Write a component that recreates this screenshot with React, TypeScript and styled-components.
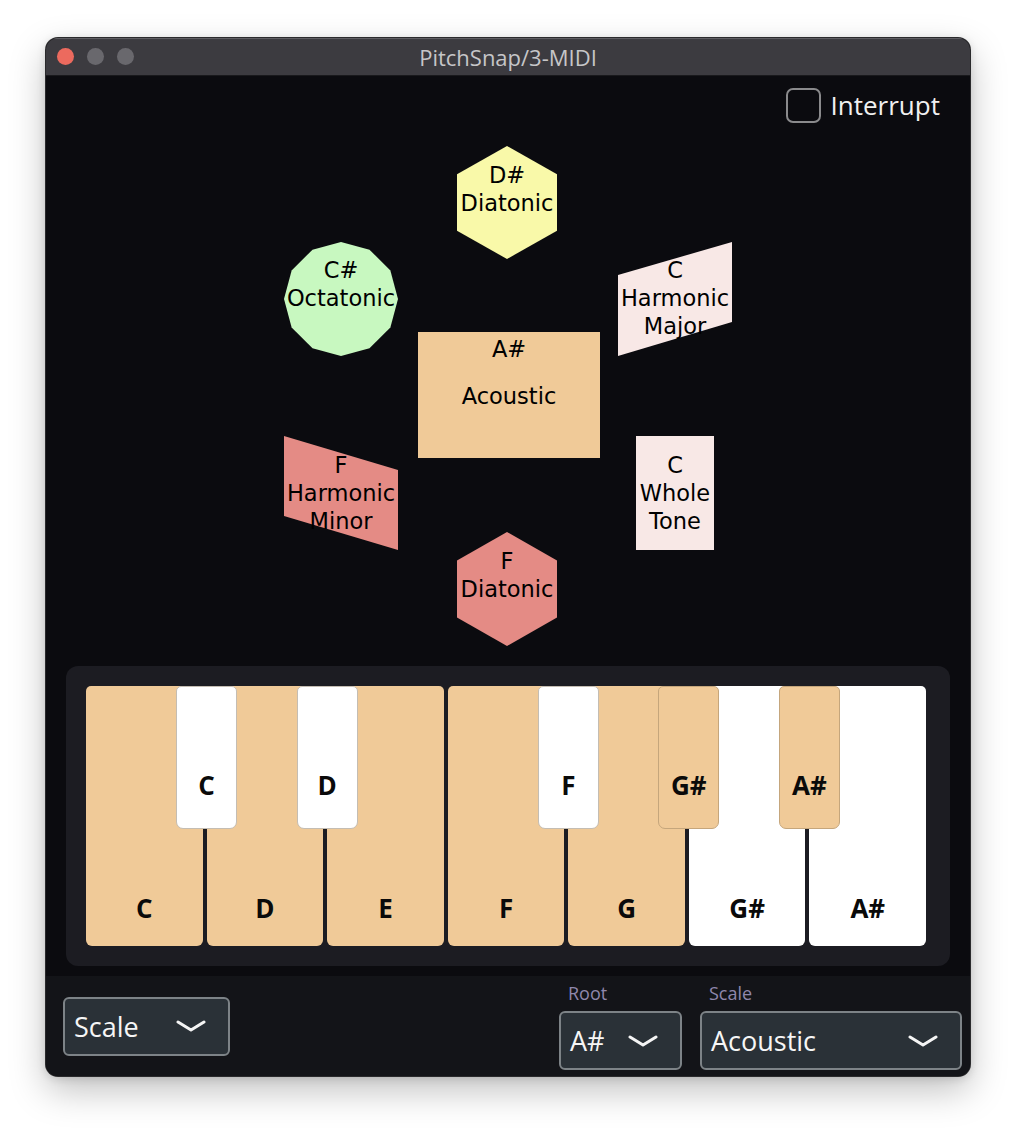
import React from 'react';
import styled, { createGlobalStyle } from 'styled-components';

const GlobalStyle = createGlobalStyle`
  html, body {
    margin: 0;
    padding: 0;
    background: #ffffff;
  }
  * {
    box-sizing: border-box;
  }
`;

const Page = styled.div`
  padding: 38px 0 0 46px;
  height: 1130px;
`;

const Window = styled.div`
  width: 924px;
  height: 1038px;
  border-radius: 12px;
  overflow: hidden;
  display: flex;
  flex-direction: column;
  background: #0b0b0f;
  box-shadow: 0 0 0 1px #2a2a2c, 0 14px 36px rgba(0, 0, 0, 0.25), 0 2px 10px rgba(0, 0, 0, 0.15);
`;

const TitleBar = styled.div`
  height: 38px;
  flex-shrink: 0;
  display: grid;
  grid-template-columns: 1fr auto 1fr;
  align-items: center;
  background: #3c3b40;
  border-bottom: 1px solid #19191c;
  box-shadow: inset 0 1px 0 #5e5d62;
`;

const Lights = styled.div`
  display: flex;
  gap: 13px;
  padding-left: 11px;
`;

const Light = styled.span<{ $color: string }>`
  width: 17px;
  height: 17px;
  border-radius: 50%;
  background: ${(p) => p.$color};
`;

const Title = styled.div`
  font-family: 'Open Sans', sans-serif;
  font-size: 22px;
  color: #c6c6c8;
`;

const Content = styled.div`
  flex: 1;
  display: flex;
  flex-direction: column;
`;

const TopRow = styled.div`
  height: 59px;
  display: flex;
  justify-content: flex-end;
  padding: 12px 30px 0 0;
`;

const Toggle = styled.label`
  display: flex;
  align-items: flex-start;
  gap: 10px;
  font-family: 'Open Sans', sans-serif;
  font-size: 26px;
  line-height: 35px;
  color: #f0f0f0;
`;

const ToggleBox = styled.span`
  width: 35px;
  height: 35px;
  border: 2px solid #8a8a8c;
  border-radius: 7px;
`;

const Canvas = styled.div`
  position: relative;
  height: 531px;
`;

const Node = styled.div`
  position: absolute;
`;

const ShapeSvg = styled.svg`
  position: absolute;
  inset: 0;
  overflow: visible;
`;

const NodeText = styled.div`
  position: absolute;
  left: -30px;
  right: -30px;
  display: flex;
  flex-direction: column;
  align-items: center;
  font-family: 'DejaVu Sans', sans-serif;
  font-size: 22.5px;
  line-height: 28px;
  color: #000000;
  white-space: nowrap;
`;

const NameBlock = styled.div<{ $gap: number }>`
  margin-top: ${(p) => p.$gap}px;
  display: flex;
  flex-direction: column;
  align-items: center;
`;

const Panel = styled.div`
  margin: 0 20px 10px;
  height: 300px;
  padding: 20px 24px 20px 20px;
  background: #1c1c22;
  border-radius: 12px;
`;

const Keys = styled.div`
  position: relative;
  height: 100%;
  display: flex;
  gap: 4px;
`;

const WhiteKey = styled.div<{ $on: boolean }>`
  flex: 1;
  background: ${(p) => (p.$on ? '#f0ca98' : '#ffffff')};
  border-radius: 5px 5px 6px 6px;
  display: flex;
  align-items: flex-end;
  justify-content: center;
  padding-bottom: 20px;
  font-family: 'Open Sans', sans-serif;
  font-weight: 700;
  font-size: 26px;
  line-height: 36px;
  color: #0a0a0a;
`;

const BlackKey = styled.div<{ $on: boolean }>`
  position: absolute;
  top: 0;
  width: 61px;
  height: 143px;
  background: ${(p) => (p.$on ? '#f0ca98' : '#ffffff')};
  border: 1px solid ${(p) => (p.$on ? '#c5a67c' : '#c4bdb3')};
  border-radius: 5px 5px 7px 7px;
  display: flex;
  align-items: flex-end;
  justify-content: center;
  padding-bottom: 25px;
  font-family: 'Open Sans', sans-serif;
  font-weight: 700;
  font-size: 26px;
  line-height: 36px;
  color: #0a0a0a;
`;

const BottomBar = styled.div`
  height: 100px;
  flex-shrink: 0;
  background: #131418;
  display: flex;
  align-items: center;
  justify-content: space-between;
  padding: 0 8px 0 17px;
`;

const Fields = styled.div`
  display: flex;
  gap: 18px;
`;

const Field = styled.div`
  display: flex;
  flex-direction: column;
  gap: 7px;
`;

const FieldLabel = styled.div`
  padding-left: 9px;
  font-family: 'Open Sans', sans-serif;
  font-size: 18px;
  line-height: 22px;
  color: #8f87ac;
`;

const Select = styled.div<{ $w: number }>`
  width: ${(p) => p.$w}px;
  height: 59px;
  border: 2px solid #7d8387;
  border-radius: 6px;
  background: #2a3137;
  display: flex;
  align-items: center;
  justify-content: space-between;
  padding: 0 22px 0 9px;
  font-family: 'Open Sans', sans-serif;
  font-size: 27px;
  color: #f6f6f6;
`;

function Chevron() {
  return (
    <svg width="30" height="12" viewBox="0 0 30 12">
      <polyline points="2,2 15,10 28,2" fill="none" stroke="#f4f4f4" strokeWidth="3" strokeLinecap="round" strokeLinejoin="round" />
    </svg>
  );
}

function Dropdown(props: { width: number; value: string }) {
  return (
    <Select $w={props.width}>
      <span>{props.value}</span>
      <Chevron />
    </Select>
  );
}

// canvas origin on the page
const OX = 46;
const OY = 135;

function hexPoints(w: number, h: number) {
  const q = h / 4;
  return [
    [w / 2, 0],
    [w, q],
    [w, h - q],
    [w / 2, h],
    [0, h - q],
    [0, q],
  ];
}

function ngonPoints(n: number, r: number) {
  var pts = [];
  for (let i = 0; i < n; i++) {
    const a = (i * 2 * Math.PI) / n;
    pts.push([r + r * Math.sin(a), r - r * Math.cos(a)]);
  }
  return pts;
}

interface ScaleNode {
  x: number;
  y: number;
  w: number;
  h: number;
  color: string;
  points: number[][];
  root: string;
  name: string[];
  rootY: number;
  gap?: number;
}

const nodes: ScaleNode[] = [
  { x: 457, y: 146, w: 100, h: 113, color: '#f9f9a9', points: hexPoints(100, 113), root: 'D#', name: ['Diatonic'], rootY: 175 },
  { x: 284, y: 242, w: 114, h: 114, color: '#c8f8c0', points: ngonPoints(12, 57), root: 'C#', name: ['Octatonic'], rootY: 270 },
  { x: 618, y: 242, w: 114, h: 114, color: '#f8e8e6', points: [[0, 33], [114, 0], [114, 80], [0, 114]], root: 'C', name: ['Harmonic', 'Major'], rootY: 270 },
  { x: 418, y: 332, w: 182, h: 126, color: '#f0ca98', points: [[0, 0], [182, 0], [182, 126], [0, 126]], root: 'A#', name: ['Acoustic'], rootY: 349, gap: 19 },
  { x: 284, y: 436, w: 114, h: 114, color: '#e48b85', points: [[0, 0], [114, 34], [114, 114], [0, 80]], root: 'F', name: ['Harmonic', 'Minor'], rootY: 465 },
  { x: 636, y: 436, w: 78, h: 114, color: '#f8e8e6', points: [[0, 0], [78, 0], [78, 114], [0, 114]], root: 'C', name: ['Whole', 'Tone'], rootY: 465 },
  { x: 457, y: 532, w: 100, h: 114, color: '#e48b85', points: hexPoints(100, 114), root: 'F', name: ['Diatonic'], rootY: 561 },
];

const whiteKeys = [
  { label: 'C', on: true },
  { label: 'D', on: true },
  { label: 'E', on: true },
  { label: 'F', on: true },
  { label: 'G', on: true },
  { label: 'G#', on: false },
  { label: 'A#', on: false },
];

const blackKeys = [
  { after: 0, label: 'C', on: false },
  { after: 1, label: 'D', on: false },
  { after: 3, label: 'F', on: false },
  { after: 4, label: 'G#', on: true },
  { after: 5, label: 'A#', on: true },
];

const KEYS_W = 840;
const KEY_GAP = 4;
const keyW = (KEYS_W - KEY_GAP * 6) / 7;

export default function App() {
  return (
    <>
      <GlobalStyle />
      <Page>
        <Window>
          <TitleBar>
            <Lights>
              <Light $color="#ec6a5e" />
              <Light $color="#69686d" />
              <Light $color="#69686d" />
            </Lights>
            <Title>PitchSnap/3-MIDI</Title>
            <div />
          </TitleBar>
          <Content>
            <TopRow>
              <Toggle>
                <ToggleBox />
                Interrupt
              </Toggle>
            </TopRow>
            <Canvas>
              {nodes.map((n, i) => (
                <Node key={i} style={{ left: n.x - OX, top: n.y - OY, width: n.w, height: n.h }}>
                  <ShapeSvg width={n.w} height={n.h}>
                    <polygon points={n.points.map((p) => p.join(',')).join(' ')} fill={n.color} />
                  </ShapeSvg>
                  <NodeText style={{ top: n.rootY - 14 - n.y }}>
                    <div>{n.root}</div>
                    <NameBlock $gap={n.gap || 0}>
                      {n.name.map((l, j) => (
                        <div key={j}>{l}</div>
                      ))}
                    </NameBlock>
                  </NodeText>
                </Node>
              ))}
            </Canvas>
            <Panel>
              <Keys>
                {whiteKeys.map((k, i) => (
                  <WhiteKey key={i} $on={k.on}>
                    {k.label}
                  </WhiteKey>
                ))}
                {blackKeys.map((k, i) => (
                  <BlackKey key={i} $on={k.on} style={{ left: (k.after + 1) * (keyW + KEY_GAP) - 30.5 }}>
                    {k.label}
                  </BlackKey>
                ))}
              </Keys>
            </Panel>
          </Content>
          <BottomBar>
            <Dropdown width={167} value="Scale" />
            <Fields>
              <Field>
                <FieldLabel>Root</FieldLabel>
                <Dropdown width={123} value="A#" />
              </Field>
              <Field>
                <FieldLabel>Scale</FieldLabel>
                <Dropdown width={262} value="Acoustic" />
              </Field>
            </Fields>
          </BottomBar>
        </Window>
      </Page>
    </>
  );
}
